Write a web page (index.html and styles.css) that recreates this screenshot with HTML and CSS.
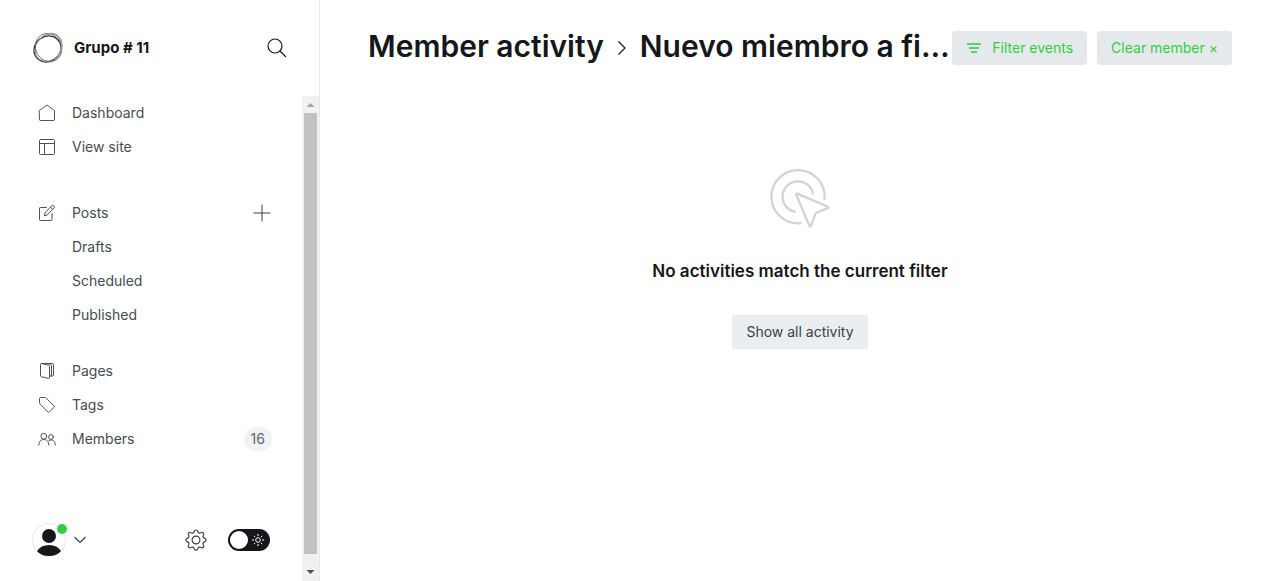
FILE: index.html
```html
<!DOCTYPE html>
<html lang="en">
<head>
<meta charset="utf-8">
<meta name="viewport" content="width=device-width, initial-scale=1">
<title>Member activity</title>
<link rel="stylesheet" href="styles.css">
</head>
<body>
<div class="app">
  <aside class="sidebar">
    <header class="site-header">
      <svg class="site-logo" viewBox="0 0 32 32" fill="none" aria-hidden="true">
        <ellipse cx="15.500" cy="17" rx="13.900" ry="12.600" stroke="#333" stroke-width="1.300" transform="rotate(-35 15.500 17)"/>
        <ellipse cx="16.500" cy="15.500" rx="15" ry="12.300" stroke="#888" stroke-width=".9" transform="rotate(-50 16.500 15.500)"/>
        <ellipse cx="16.600" cy="15.600" rx="14.600" ry="12.900" stroke="#666" stroke-width=".8" transform="rotate(60 16.600 15.600)"/>
        <path d="M15 2.500c6-2.500 11 0 14 7M29 9c2 7 0 13-6 18" stroke="#999" stroke-width="1.400"/>
      </svg>
      <span class="site-name">Grupo # 11</span>
      <button class="icon-button" type="button" aria-label="Search">
        <svg class="icon-search" viewBox="0 0 20 20" fill="none" stroke="#15171a" stroke-width="1.200" stroke-linecap="round"><circle cx="8" cy="8" r="7"/><path d="m13 13 5.500 5.500"/></svg>
      </button>
    </header>
    <div class="sidebar-body">
      <div class="sidebar-content">
        <nav class="nav" aria-label="Main">
          <ul class="nav-group">
            <li class="nav-row"><a class="nav-link" href="#"><svg class="nav-icon" viewBox="0 0 18 18"><path d="M1.500 6.500 9 1l7.500 5.500v9.200q0 .8-.8.800H2.300q-.8 0-.8-.8z"/></svg>Dashboard</a></li>
            <li class="nav-row"><a class="nav-link" href="#"><svg class="nav-icon" viewBox="0 0 18 18"><rect x="1.500" y="1.500" width="15" height="15" rx="1"/><path d="M1.500 5.500h15M6.500 5.500v11"/></svg>View site</a></li>
          </ul>
          <ul class="nav-group nav-group-posts">
            <li class="nav-row"><a class="nav-link" href="#"><svg class="nav-icon" viewBox="0 0 18 18"><path d="M8.500 3.500H2.300q-.8 0-.8.800v11.400q0 .8.800.8h10.900q.8 0 .8-.8V9.500M6.500 11.500l.8-3.300 6.800-6.600q.8-.8 1.700 0l.4.400q.8.800 0 1.700l-6.600 6.900zM12.500 3.200l2.200 2.200"/></svg>Posts</a>
              <button class="icon-button" type="button" aria-label="New post"><svg class="icon-plus" viewBox="0 0 18 18" fill="none" stroke="#394047"><path d="M9 .5v17M.5 9h17"/></svg></button></li>
            <li class="nav-row"><a class="nav-link nav-sub" href="#">Drafts</a></li>
            <li class="nav-row"><a class="nav-link nav-sub" href="#">Scheduled</a></li>
            <li class="nav-row"><a class="nav-link nav-sub" href="#">Published</a></li>
          </ul>
          <ul class="nav-group">
            <li class="nav-row"><a class="nav-link" href="#"><svg class="nav-icon" viewBox="0 0 18 18"><path d="M2.500 2.200q0-.7.800-.7l7.200 1.700q1 .2 1 1.200v11.300q0 1-1 .7l-7.200-1.700q-.8-.2-.8-1zM3.500 1.500h10.800q1.200 0 1.200 1.200v10.600q0 .7-.8.700h-3.200M9 1.500l3.500.8q1 .3 1 1.200V14"/></svg>Pages</a></li>
            <li class="nav-row"><a class="nav-link" href="#"><svg class="nav-icon" viewBox="0 0 18 18"><path d="M1.500 2.300q0-.8.800-.8h4.500q.8 0 1.400.6l7.900 7.900q.6.600 0 1.200l-4.900 4.900q-.6.600-1.200 0L2.100 8.200q-.6-.6-.6-1.400z"/></svg>Tags</a></li>
            <li class="nav-row"><a class="nav-link" href="#"><svg class="nav-icon" viewBox="0 0 18 18"><circle cx="5.800" cy="6.200" r="2.900"/><circle cx="13" cy="7" r="2.400"/><path d="M.8 15c0-3.700 2-5.400 5-5.400s5 1.700 5 5.400M11 10.500c3.400-1.700 6.300.2 6.300 4.500"/></svg>Members</a><span class="count">16</span></li>
          </ul>
        </nav>
        <footer class="user-bar">
          <button class="user-menu" type="button" aria-label="Account menu">
            <span class="avatar"><svg class="avatar-image" viewBox="0 0 34 34"><circle cx="17" cy="17" r="16.500" fill="#fff" stroke="#e6e9eb"/><circle cx="17" cy="13" r="7" fill="#15171a"/><path d="M5 28q4-6 12-6t12 6q-4 5-12 5T5 28z" fill="#15171a"/></svg><span class="badge"></span></span>
            <svg class="icon-chevron" viewBox="0 0 12 8" fill="none" stroke="#394047" stroke-width="1.200"><path d="m.5 1 5.500 5.500L11.500 1"/></svg>
          </button>
          <button class="icon-button settings" type="button" aria-label="Settings">
            <svg class="icon-settings" viewBox="0 0 22 22" fill="none" stroke="#394047" stroke-width="1.200" stroke-linejoin="round"><circle cx="11" cy="11" r="3.900"/><path d="M9.200 2.500c.5-2 3.100-2 3.600 0 .4 1.500 1.900 2.100 3.200 1.300 1.700-1.100 3.500.7 2.400 2.400-.8 1.300-.2 2.700 1.200 3.100 2 .5 2 3 0 3.500-1.400.4-2 1.900-1.200 3.200 1.100 1.700-.7 3.500-2.400 2.400-1.300-.8-2.800-.2-3.200 1.200-.5 2-3.100 2-3.600 0-.4-1.400-1.900-2-3.200-1.200-1.700 1.100-3.500-.7-2.400-2.400.8-1.300.2-2.800-1.200-3.200-2-.5-2-3 0-3.500 1.400-.4 2-1.800 1.200-3.100C2.500 4.500 4.300 2.700 6 3.800c1.300.8 2.800.2 3.200-1.300z"/></svg>
          </button>
          <label class="switch">
            <input class="switch-input" type="checkbox" aria-label="Dark mode">
            <span class="knob"></span>
            <svg class="icon-sun" viewBox="0 0 12 12" fill="none" stroke="#fff"><circle cx="6" cy="6" r="2.300"/><path d="M6 0v2M6 10v2M0 6h2M10 6h2M1.800 1.800l1.300 1.300M8.900 8.900l1.300 1.300M1.800 10.200l1.300-1.300M8.900 3.100l1.300-1.300"/></svg>
          </label>
        </footer>
      </div>
      <div class="scrollbar" aria-hidden="true">
        <svg class="arrow" viewBox="0 0 17 17"><path d="M4.500 11h8l-4-4z" fill="#a3a3a3"/></svg>
        <div class="track"><div class="thumb"></div></div>
        <svg class="arrow" viewBox="0 0 17 17"><path d="M4.500 6h8l-4 4z" fill="#505050"/></svg>
      </div>
    </div>
  </aside>
  <main class="main">
    <header class="page-header">
      <h1 class="title">
        <a class="title-text" href="#">Member activity</a>
        <svg class="icon-crumb" viewBox="0 0 8 16" fill="none" stroke="#15171a" stroke-width="1.200"><path d="m.5 1.500 6.500 6.500-6.500 6.500"/></svg>
        <span class="title-text">Nuevo miembro a fi…</span>
      </h1>
      <div class="actions">
        <button class="button button-green" type="button"><svg class="icon-filter" viewBox="0 0 14 10" fill="none" stroke="#30cf43" stroke-opacity=".8" stroke-width="2"><path d="M0 1h14M2 5h10M4 9h6"/></svg><span class="button-label">Filter events</span></button>
        <button class="button button-green" type="button"><span class="button-label">Clear member ×</span></button>
      </div>
    </header>
    <section class="empty">
      <svg class="empty-icon" viewBox="0 0 60 60" fill="none" stroke="#ced4d9" stroke-width="2.300" stroke-linecap="round" stroke-linejoin="round"><path d="M30.500 54.200A26.600 26.600 0 1 1 54.500 30"/><path d="M24.500 42.700A15.400 15.400 0 1 1 43 24.500"/><path d="M26.500 26.200q-1-2.300 1.300-1.300l29.500 12.500q2.400 1 0 2l-10.800 4.300q-.8.300-1.100 1.100l-4.200 11.500q-1 2.500-2.100 0z"/></svg>
      <h2 class="empty-title">No activities match the current filter</h2>
      <button class="button" type="button"><span class="button-label">Show all activity</span></button>
    </section>
  </main>
</div>
</body>
</html>
```
FILE: styles.css
```css
* { box-sizing: border-box; }
body { margin: 0; font-family: Inter, "Liberation Sans", sans-serif; font-size: 14px; color: #15171a; background: #fff; }
button { font: inherit; border: 0; padding: 0; background: none; color: inherit; cursor: pointer; }
a { color: inherit; text-decoration: none; }
svg { display: block; flex: none; }

.app { display: flex; height: 100vh; }
.sidebar { display: flex; flex-direction: column; flex: 0 0 320px; border-right: 1px solid #e6e9eb; }
.site-header { display: flex; align-items: center; flex: none; height: 96px; padding: 0 32px; }
.site-logo { width: 32px; height: 32px; }
.site-name { flex: 1; margin-left: 10px; padding-bottom: 2px; font-size: 15px; font-weight: 700; }
.icon-button { display: flex; align-items: center; justify-content: center; }
.icon-search { width: 20px; height: 20px; }

.sidebar-body { display: flex; flex: 1; min-height: 0; }
.sidebar-content { display: flex; flex-direction: column; flex: 1; }
.nav { flex: 1; min-height: 0; padding: 0 30px 0 38px; }
.nav-group { list-style: none; margin: 0; padding: 0; }
.nav-group-posts { margin: 32px 0 22px; }
.nav-row { display: flex; align-items: center; justify-content: space-between; height: 34px; }
.nav-link { display: flex; flex: 1; align-items: center; gap: 16px; color: #454c54; line-height: 34px; }
.nav-sub { padding-left: 34px; }
.nav-icon { width: 18px; height: 18px; fill: none; stroke: #4b5259; stroke-width: 1; stroke-linejoin: round; stroke-linecap: round; }
.icon-plus { width: 18px; height: 18px; margin-right: 1px; }
.count { padding: 0 7px; border-radius: 12px; background: #f1f2f4; color: #5d6670; line-height: 24px; }

.user-bar { display: flex; align-items: center; flex: none; height: 82px; padding: 0 32px; }
.user-menu { display: flex; align-items: center; gap: 8px; }
.avatar { position: relative; }
.avatar-image { width: 34px; height: 34px; }
.badge { position: absolute; top: 1px; right: -1px; width: 10px; height: 10px; border-radius: 50%; background: #30cf43; }
.icon-chevron { width: 12px; height: 8px; }
.settings { margin-left: auto; }
.icon-settings { width: 22px; height: 22px; }
.switch { display: flex; align-items: center; position: relative; width: 42px; height: 22px; margin-left: 21px; padding: 0 6px 0 2px; justify-content: space-between; border-radius: 11px; background: #15171a; }
.switch-input { position: absolute; inset: 0; margin: 0; opacity: 0; width: 100%; height: 100%; }
.knob { width: 18px; height: 18px; border-radius: 50%; background: #fff; }
.icon-sun { width: 12px; height: 12px; }

.scrollbar { display: flex; flex-direction: column; flex: 0 0 17px; background: #f1f1f1; }
.arrow { width: 17px; height: 17px; }
.track { flex: 1; padding: 0 2px 10px; }
.thumb { height: 100%; background: #c1c1c1; }

.main { flex: 1; min-width: 0; }
.page-header { display: flex; align-items: center; justify-content: space-between; height: 96px; padding: 0 48px; }
.title { display: flex; align-items: center; min-width: 0; margin: 0; font-size: 30px; font-weight: 600; line-height: 40px; white-space: nowrap; }
.title-text { padding-bottom: 4px; }
.icon-crumb { width: 8px; height: 16px; margin: 0 14px; }
.actions { display: flex; flex: none; gap: 10px; }
.button { display: flex; align-items: center; height: 34px; padding: 0 14px; border-radius: 3px; background: #ebeef0; color: #394047; font-size: 14px; white-space: nowrap; }
.button-green { background: #e6e9eb; color: #30cf43; }
.button-label { padding-bottom: 2px; }
.icon-filter { width: 14px; height: 10px; margin: 0 11px 0 1px; }

.empty { display: flex; flex-direction: column; align-items: center; padding-top: 73px; }
.empty-icon { width: 60px; height: 60px; }
.empty-title { margin: 31px 0 33px; font-size: 17px; font-weight: 600; line-height: 22px; }
```
